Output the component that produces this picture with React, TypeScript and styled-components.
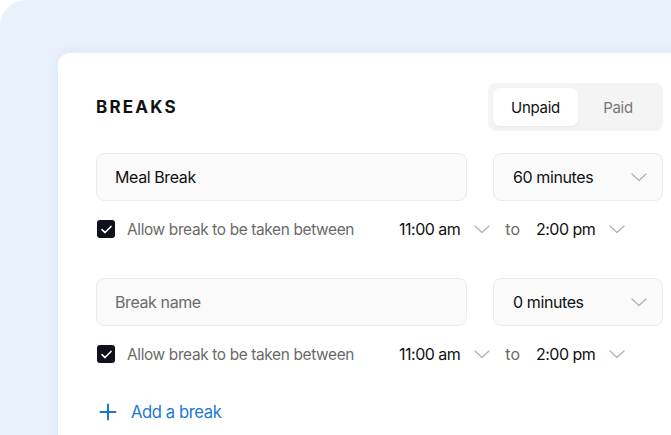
import React from 'react';
import styled, { createGlobalStyle } from 'styled-components';

interface BreakItem {
	name: string;
	placeholder: string;
	duration: string;
	from: string;
	to: string;
}

const breaks: BreakItem[] = [
	{ name: 'Meal Break', placeholder: 'Break name', duration: '60 minutes', from: '11:00 am', to: '2:00 pm' },
	{ name: '', placeholder: 'Break name', duration: '0 minutes', from: '11:00 am', to: '2:00 pm' },
];

const Chevron = () => (
	<ChevronSvg viewBox='0 0 16 9' fill='none'>
		<path d='M1 1l7 6.5L15 1' stroke='currentColor' strokeWidth='1.4' strokeLinecap='round' strokeLinejoin='round' />
	</ChevronSvg>
);

const Check = () => (
	<svg width='11' height='9' viewBox='0 0 11 9' fill='none'>
		<path d='M1 4.6l3 3L10 1.4' stroke='#fff' strokeWidth='1.5' strokeLinecap='round' strokeLinejoin='round' />
	</svg>
);

const App = () => {
	return (
		<>
			<GlobalStyle />
			<Page>
				<Panel>
					<Card>
						<Header>
							<Title>BREAKS</Title>
							<Toggle>
								<ToggleButton $active>Unpaid</ToggleButton>
								<ToggleButton>Paid</ToggleButton>
							</Toggle>
						</Header>

						{breaks.map((b, i) => (
							<BreakBlock key={i}>
								<InputRow>
									<NameInput readOnly value={b.name} placeholder={b.placeholder} />
									<Select>
										<span>{b.duration}</span>
										<Chevron />
									</Select>
								</InputRow>
								<OptionsRow>
									<CheckLabel>
										<CheckBox>
											<Check />
										</CheckBox>
										Allow break to be taken between
									</CheckLabel>
									<TimeSelect>
										<span>{b.from}</span>
										<Chevron />
									</TimeSelect>
									<ToWord>to</ToWord>
									<TimeSelect>
										<span>{b.to}</span>
										<Chevron />
									</TimeSelect>
								</OptionsRow>
							</BreakBlock>
						))}

						<AddButton>
							<svg width='18' height='18' viewBox='0 0 18 18' fill='none'>
								<path d='M9 1.5v15M1.5 9h15' stroke='currentColor' strokeWidth='2' strokeLinecap='round' />
							</svg>
							Add a break
						</AddButton>
					</Card>
				</Panel>
			</Page>
		</>
	);
};

const GlobalStyle = createGlobalStyle`
	body {
		margin: 0;
		background: #ffffff;
		font-family: Inter, 'Liberation Sans', sans-serif;
	}
`;

const Page = styled.div`
	width: 671px;
	height: 435px;
	overflow: hidden;
	background: #ffffff;
`;

const Panel = styled.div`
	height: 100%;
	box-sizing: border-box;
	padding: 53px 0 0 58px;
	background: #e8f1fc;
	border-top-left-radius: 26px;
	overflow: hidden;
`;

const Card = styled.div`
	width: 643px;
	height: 420px;
	box-sizing: border-box;
	padding: 30px 38px;
	background: #ffffff;
	border-top-left-radius: 12px;
	box-shadow: 0 0 14px rgba(40, 80, 140, 0.06);
`;

const Header = styled.div`
	display: flex;
	align-items: center;
	justify-content: space-between;
	height: 48px;
`;

const Title = styled.h2`
	margin: 0;
	font-size: 17px;
	font-weight: 700;
	letter-spacing: 2.2px;
	color: #111111;
`;

const Toggle = styled.div`
	display: flex;
	padding: 5px;
	background: #f4f4f4;
	border-radius: 8px;
`;

const ToggleButton = styled.div<{ $active?: boolean }>`
	display: flex;
	align-items: center;
	justify-content: center;
	width: ${(p) => (p.$active ? '85px' : '80px')};
	height: 38px;
	border-radius: 7px;
	font-size: 15px;
	letter-spacing: -0.3px;
	color: ${(p) => (p.$active ? '#111111' : '#777777')};
	background: ${(p) => (p.$active ? '#ffffff' : 'transparent')};
	box-shadow: ${(p) => (p.$active ? '0 1px 3px rgba(0, 0, 0, 0.05)' : 'none')};
`;

const BreakBlock = styled.div`
	margin-top: 22px;

	& + & {
		margin-top: 35px;
	}
`;

const InputRow = styled.div`
	display: grid;
	grid-template-columns: 371px 170px;
	gap: 26px;
`;

const NameInput = styled.input`
	height: 48px;
	box-sizing: border-box;
	padding: 0 18px;
	border: 1px solid #ebebeb;
	border-radius: 8px;
	background: #fafafa;
	font-family: inherit;
	font-size: 16px;
	letter-spacing: -0.4px;
	color: #111111;
	outline: none;

	&::placeholder {
		color: #6b6b6b;
	}
`;

const Select = styled.div`
	display: flex;
	align-items: center;
	justify-content: space-between;
	height: 48px;
	box-sizing: border-box;
	padding: 0 15px 0 19px;
	border: 1px solid #ebebeb;
	border-radius: 8px;
	background: #fafafa;
	font-size: 16px;
	letter-spacing: -0.4px;
	color: #111111;
`;

const ChevronSvg = styled.svg`
	width: 16px;
	height: 9px;
	color: #b4b4b4;
`;

const OptionsRow = styled.div`
	display: flex;
	align-items: center;
	height: 28px;
	margin-top: 14px;
	padding-left: 1px;
`;

const CheckLabel = styled.label`
	display: flex;
	align-items: center;
	gap: 12px;
	width: 302px;
	font-size: 15.4px;
	letter-spacing: -0.35px;
	color: #6a6a6a;
`;

const CheckBox = styled.span`
	display: flex;
	align-items: center;
	justify-content: center;
	width: 18px;
	height: 18px;
	border-radius: 3px;
	background: #10111d;
`;

const TimeSelect = styled.div`
	display: flex;
	align-items: center;
	gap: 14px;
	font-size: 16px;
	letter-spacing: -0.5px;
	color: #111111;
`;

const ToWord = styled.span`
	margin: 0 16px 0 15px;
	font-size: 16px;
	color: #6a6a6a;
`;

const AddButton = styled.div`
	display: flex;
	align-items: center;
	gap: 14px;
	margin-top: 34px;
	padding-left: 3px;
	font-size: 16.6px;
	letter-spacing: -0.4px;
	color: #1b78d8;
`;

export default App;
